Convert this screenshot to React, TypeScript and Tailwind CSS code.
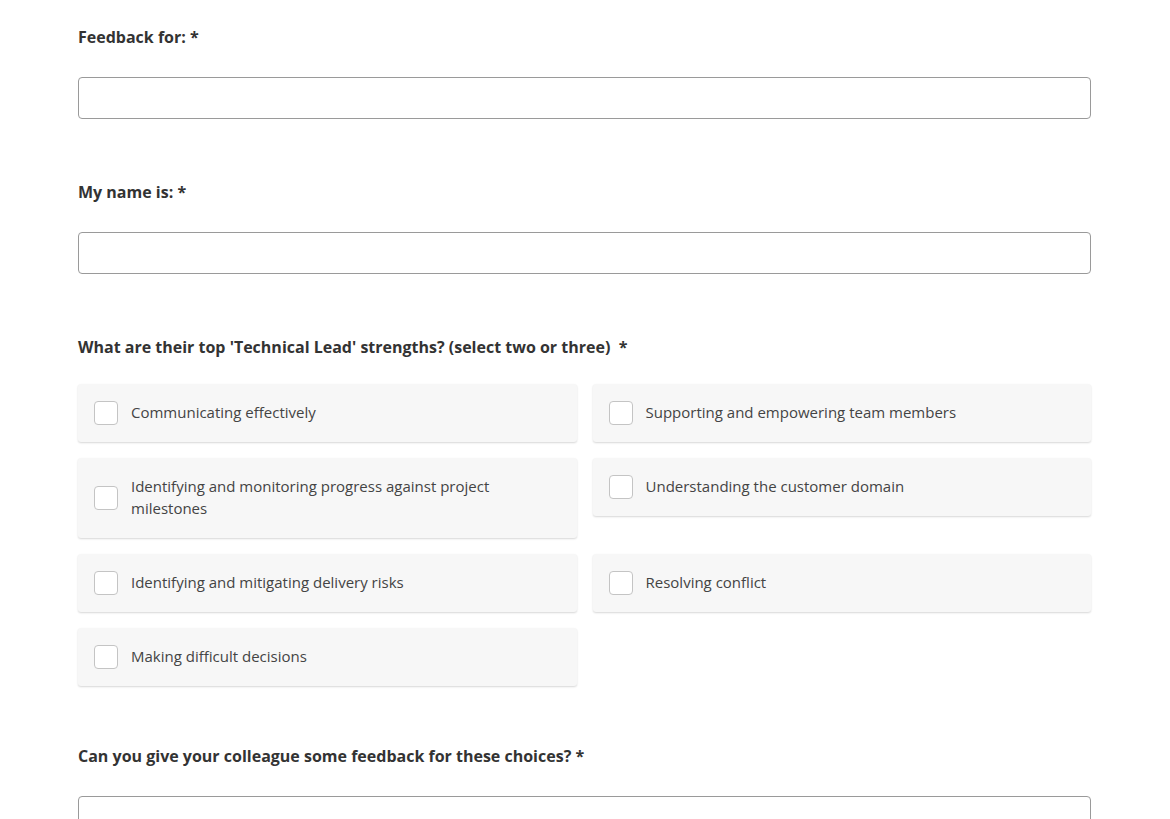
import { useState } from "react";

// ── Data ──────────────────────────────────────────────────────────────────────

const strengths = [
  "Communicating effectively",
  "Supporting and empowering team members",
  "Identifying and monitoring progress against project milestones",
  "Understanding the customer domain",
  "Identifying and mitigating delivery risks",
  "Resolving conflict",
  "Making difficult decisions",
];

// ── Field label ───────────────────────────────────────────────────────────────

const Label = ({ children }: { children: React.ReactNode }) => (
  <label className="block text-[16px] leading-[24px] font-bold text-[#333333]">
    {children}
  </label>
);

const TextInput = () => (
  <input
    type="text"
    className="block w-full h-[42px] mt-[28px] px-3 rounded-[4px] border border-[#9a9a9a] bg-white outline-none focus:border-[#666]"
  />
);

// ── Checkbox card ─────────────────────────────────────────────────────────────

interface OptionProps {
  label: string;
  checked: boolean;
  onToggle: () => void;
}

const Option = ({ label, checked, onToggle }: OptionProps) => (
  <button
    type="button"
    onClick={onToggle}
    className="flex items-center gap-[13px] pl-4 pr-4 py-[17px] text-left rounded-[3px] bg-[#f7f7f7] shadow-[0_1px_2px_rgba(0,0,0,0.16)] cursor-pointer"
  >
    <span
      className={[
        "shrink-0 w-6 h-6 rounded-[4px] border bg-white",
        checked ? "border-[#666]" : "border-[#c4c4c4]",
      ].join(" ")}
    >
      {checked && (
        <svg viewBox="0 0 24 24" className="w-full h-full" fill="none" stroke="#444" strokeWidth="2.5">
          <path d="M6 12l4 4 8-8" />
        </svg>
      )}
    </span>
    <span className="text-[15px] leading-[22px] text-[#444444] pb-[2px]">{label}</span>
  </button>
);

// ── App ───────────────────────────────────────────────────────────────────────

export default function App() {
  const [selected, setSelected] = useState<string[]>([]);

  const toggle = (s: string) =>
    setSelected((prev) => (prev.includes(s) ? prev.filter((x) => x !== s) : [...prev, s]));

  return (
    <div className="min-h-screen bg-white font-['Open_Sans',sans-serif]">
      <div className="pl-[78px] pr-[79px] pt-[25px]">
        <div>
          <Label>Feedback for: *</Label>
          <TextInput />
        </div>

        <div className="mt-[61px]">
          <Label>My name is: *</Label>
          <TextInput />
        </div>

        <div className="mt-[61px]">
          <Label>What are their top 'Technical Lead' strengths? (select two or three)&nbsp; *</Label>
          <div className="grid grid-cols-2 gap-4 items-start mt-[25px]">
            {strengths.map((s) => (
              <Option key={s} label={s} checked={selected.includes(s)} onToggle={() => toggle(s)} />
            ))}
          </div>
        </div>

        <div className="mt-[58px]">
          <Label>Can you give your colleague some feedback for these choices? *</Label>
          <textarea className="block w-full h-[120px] mt-[28px] px-3 py-2 rounded-[4px] border border-[#9a9a9a] bg-white outline-none resize-none" />
        </div>
      </div>
    </div>
  );
}
